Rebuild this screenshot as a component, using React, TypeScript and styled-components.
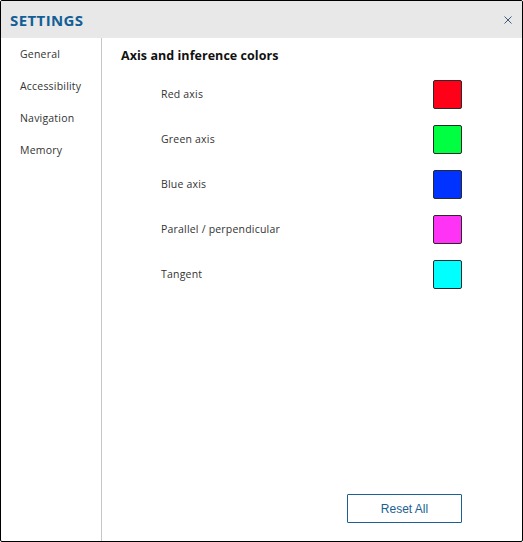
import React from "react";
import styled, { createGlobalStyle } from "styled-components";

const GlobalStyle = createGlobalStyle`
  html, body {
    margin: 0;
    padding: 0;
    background: #ffffff;
  }
  * {
    box-sizing: border-box;
  }
`;

const navItems = ["General", "Accessibility", "Navigation", "Memory"];

const axisColors = [
  { label: "Red axis", color: "#ff0019" },
  { label: "Green axis", color: "#00ff41" },
  { label: "Blue axis", color: "#0033ff" },
  { label: "Parallel / perpendicular", color: "#ff33f5" },
  { label: "Tangent", color: "#00ffff" },
];

const App: React.FC = () => {
  return (
    <>
      <GlobalStyle />
      <Dialog>
        <Header>
          <Title>SETTINGS</Title>
          <CloseButton aria-label="Close">
            <svg width="8" height="8" viewBox="0 0 8 8">
              <path d="M0.5 0.5 L7.5 7.5 M7.5 0.5 L0.5 7.5" stroke="#3d5a78" strokeWidth="1" />
            </svg>
          </CloseButton>
        </Header>
        <Body>
          <Sidebar>
            {navItems.map((item) => (
              <NavItem key={item}>{item}</NavItem>
            ))}
          </Sidebar>
          <Content>
            <SectionTitle>Axis and inference colors</SectionTitle>
            <ColorList>
              {axisColors.map((row) => (
                <ColorRow key={row.label}>
                  <ColorLabel>{row.label}</ColorLabel>
                  <Swatch $color={row.color} />
                </ColorRow>
              ))}
            </ColorList>
            <Footer>
              <ResetButton>Reset All</ResetButton>
            </Footer>
          </Content>
        </Body>
      </Dialog>
    </>
  );
};

const Dialog = styled.div`
  width: 523px;
  height: 542px;
  border: 1px solid #000;
  border-radius: 2px;
  display: flex;
  flex-direction: column;
  overflow: hidden;
  font-family: "Open Sans", "Noto Sans", sans-serif;
  background: #fff;
`;

const Header = styled.div`
  height: 37px;
  flex: none;
  background: #e8e8e8;
  display: flex;
  align-items: center;
  justify-content: space-between;
  padding: 0 10px 0 9px;
`;

const Title = styled.h1`
  margin: 0;
  font-size: 15px;
  font-weight: 700;
  letter-spacing: 0.4px;
  color: #135e96;
`;

const CloseButton = styled.button`
  border: none;
  background: transparent;
  padding: 0;
  width: 8px;
  height: 8px;
  display: flex;
  cursor: pointer;
`;

const Body = styled.div`
  flex: 1;
  display: flex;
  min-height: 0;
`;

const Sidebar = styled.nav`
  width: 101px;
  flex: none;
  border-right: 1px solid #c6c6cc;
  display: flex;
  flex-direction: column;
  gap: 12px;
  padding: 6px 0 0 19px;
`;

const NavItem = styled.div`
  height: 20px;
  line-height: 20px;
  font-size: 10.5px;
  letter-spacing: 0.2px;
  color: #333;
`;

const Content = styled.div`
  flex: 1;
  display: flex;
  flex-direction: column;
  padding: 8px 60px 18px 19px;
`;

const SectionTitle = styled.h2`
  margin: 0;
  height: 20px;
  line-height: 20px;
  font-size: 12.5px;
  font-weight: 700;
  letter-spacing: 0.05px;
  color: #111;
`;

const ColorList = styled.div`
  display: flex;
  flex-direction: column;
  gap: 16px;
  margin-top: 14px;
  padding-left: 40px;
`;

const ColorRow = styled.div`
  height: 29px;
  display: flex;
  align-items: center;
  justify-content: space-between;
`;

const ColorLabel = styled.span`
  font-size: 10.5px;
  letter-spacing: 0.2px;
  color: #333;
  margin-top: -1px;
`;

const Swatch = styled.div<{ $color: string }>`
  width: 29px;
  height: 29px;
  border: 1px solid #2a2a2a;
  border-radius: 2px;
  background: ${(p) => p.$color};
`;

const Footer = styled.div`
  margin-top: auto;
  display: flex;
  justify-content: flex-end;
`;

const ResetButton = styled.button`
  width: 115px;
  height: 29px;
  border: 1px solid #1c5f92;
  border-radius: 1px;
  background: #fff;
  color: #1c5f92;
  font-family: "Liberation Sans", Arial, sans-serif;
  font-size: 12px;
  cursor: pointer;
`;

export default App;
